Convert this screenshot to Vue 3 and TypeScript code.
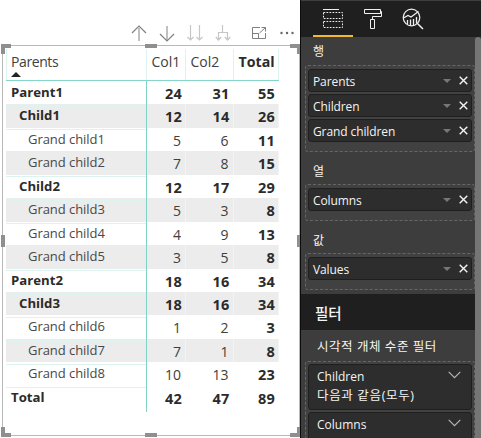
<script setup lang="ts">
interface Row {
  label: string
  level: number
  values: number[]
}

interface Well {
  title: string
  kind: string
  fields: string[]
}

const rows: Row[] = [
  { label: 'Parent1', level: 0, values: [24, 31, 55] },
  { label: 'Child1', level: 1, values: [12, 14, 26] },
  { label: 'Grand child1', level: 2, values: [5, 6, 11] },
  { label: 'Grand child2', level: 2, values: [7, 8, 15] },
  { label: 'Child2', level: 1, values: [12, 17, 29] },
  { label: 'Grand child3', level: 2, values: [5, 3, 8] },
  { label: 'Grand child4', level: 2, values: [4, 9, 13] },
  { label: 'Grand child5', level: 2, values: [3, 5, 8] },
  { label: 'Parent2', level: 0, values: [18, 16, 34] },
  { label: 'Child3', level: 1, values: [18, 16, 34] },
  { label: 'Grand child6', level: 2, values: [1, 2, 3] },
  { label: 'Grand child7', level: 2, values: [7, 1, 8] },
  { label: 'Grand child8', level: 2, values: [10, 13, 23] },
  { label: 'Total', level: 0, values: [42, 47, 89] },
]

const wells: Well[] = [
  { title: '행', kind: 'rows', fields: ['Parents', 'Children', 'Grand children'] },
  { title: '열', kind: 'cols', fields: ['Columns'] },
  { title: '값', kind: 'vals', fields: ['Values'] },
]

const handles = ['tl', 'tc', 'tr', 'ml', 'mr', 'bl', 'bc', 'br']

const isShaded = (i: number): boolean => i % 2 === 1 && i < rows.length - 1
</script>

<template>
  <div class="app">
    <section class="canvas">
      <div class="toolbar">
        <svg width="170" height="18" viewBox="0 0 170 18" fill="none">
          <g stroke="#c0c0c0" stroke-width="2">
            <path d="M9 3V16M37 1V15" />
          </g>
          <g stroke="#808080" stroke-width="1.2">
            <path d="M2 8L9 1L16 8M30 9L37 16L44 9" />
          </g>
          <g stroke="#c6c6c6" stroke-width="1.2">
            <path d="M60.5 0V15M69.5 0V15M57.5 12L60.5 15L63.5 12M66.5 12L69.5 15L72.5 12" />
            <path d="M92.500 0V7M88.500 15V7.500H97.500V15M85.800 12L88.500 15L91.200 12M94.800 12L97.500 15L100.200 12" />
          </g>
          <g stroke="#808080" stroke-width="1">
            <path d="M130 2.500H122.500V13.500H135.500V8M122.500 8.500H128.500V13.500M129.500 8L135.500 2.500M131.500 2.500H135.500V6.500" />
          </g>
          <g fill="#666">
            <circle cx="151.500" cy="8" r="1.200" />
            <circle cx="157" cy="8" r="1.200" />
            <circle cx="162.500" cy="8" r="1.200" />
          </g>
        </svg>
      </div>
      <div class="visual">
        <i v-for="h in handles" :key="h" class="handle" :class="h"></i>
        <div class="matrix">
          <div class="row head">
            <div class="label"><span>Parents</span><i class="sort"></i></div>
            <div class="c">Col1</div>
            <div class="c">Col2</div>
            <div class="c total">Total</div>
          </div>
          <div v-for="(r, i) in rows" :key="r.label" class="row" :class="['l' + r.level, { alt: isShaded(i), last: i === rows.length - 1 }]">
            <div class="label"><span>{{ r.label }}</span></div>
            <div v-for="(v, k) in r.values" :key="k" class="c" :class="{ total: k === 2 }">{{ v }}</div>
          </div>
        </div>
      </div>
    </section>

    <aside class="panel">
      <div class="tabs">
        <svg width="110" height="24" viewBox="0 0 110 24" fill="none" stroke="#f0f0f0">
          <path d="M1 1.500H17" />
          <path d="M1.500 4.500H20.500V10.500H1.500ZM1.500 13.500H20.500V19.500H1.500Z" stroke-dasharray="1.700 1.300" />
          <path d="M42.500 1.500H58.500V5.500H42.500ZM58.500 3.500H59.500V8.500H50.500V11.500M48.500 11.500H52.500V20.500H48.500Z" />
          <circle cx="89.500" cy="9.500" r="8.300" stroke-width="1.200" />
          <path d="M95.500 15.500L101 21" stroke-width="1.500" />
          <path d="M81.500 10L86 7.500L89 9L96.500 3.500" stroke-width="1.200" />
          <path d="M85.500 12V16M88.500 11.500V17.500M91.500 11V17.500M94.500 9V15.500" stroke-width="1.300" />
        </svg>
      </div>
      <div class="body">
        <div class="content">
          <div v-for="w in wells" :key="w.title" class="group" :class="w.kind">
            <div class="title">{{ w.title }}</div>
            <div class="well">
              <div v-for="f in w.fields" :key="f" class="chip">
                <span>{{ f }}</span>
                <i class="caret"></i>
                <svg width="9" height="9" viewBox="0 0 9 9"><path d="M.7 .7L8.300 8.300M8.300 .7L.7 8.300" stroke="#f4f4f4" stroke-width="1.400" /></svg>
              </div>
            </div>
          </div>
          <div class="filter-head">필터</div>
          <div class="filter-sub">시각적 개체 수준 필터</div>
          <div class="well filters">
            <div class="card">
              <div class="card-top">
                <span>Children</span>
                <svg width="13" height="8" viewBox="0 0 13 8"><path d="M.7 .8L6.500 6.600L12.300 .8" fill="none" stroke="#b5b5b5" stroke-width="1.200" /></svg>
              </div>
              <div class="cond">다음과 같음(모두)</div>
            </div>
            <div class="card">
              <div class="card-top">
                <span>Columns</span>
                <svg width="13" height="8" viewBox="0 0 13 8"><path d="M.7 .8L6.500 6.600L12.300 .8" fill="none" stroke="#b5b5b5" stroke-width="1.200" /></svg>
              </div>
            </div>
          </div>
        </div>
        <div class="scroll"></div>
      </div>
    </aside>
  </div>
</template>

<style>
body { margin: 0; overflow: hidden; }
</style>

<style scoped>
* { box-sizing: border-box; }
.app {
  display: flex;
  width: 481px;
  height: 438px;
  overflow: hidden;
  background: #fff;
  font-family: "Open Sans", "Noto Sans CJK KR", sans-serif;
  color: #2b2b2b;
}
.canvas { width: 300px; padding: 25px 0 0 2px; flex: none; }
.toolbar { height: 20px; padding-left: 128px; }
.toolbar svg { display: block; }
.visual {
  position: relative;
  width: 298px;
  height: 391px;
  border: 1px solid #b8b8b8;
  padding: 3px 0 0 3px;
}
.handle { position: absolute; width: 12px; height: 4px; background: #8f8f8f; }
.tl, .tr, .bl, .br { width: 10px; height: 10px; background: none; border: 0 solid #8f8f8f; }
.tl { left: -2px; top: -2px; border-width: 4px 0 0 4px; }
.tr { right: -1px; top: -2px; border-width: 4px 3px 0 0; }
.bl { left: -2px; bottom: -2px; border-width: 0 0 4px 4px; }
.br { right: -1px; bottom: -2px; border-width: 0 3px 4px 0; }
.tc { left: 142px; top: -2px; }
.bc { left: 142px; bottom: -2px; }
.ml { left: -2px; top: 189px; width: 4px; height: 12px; }
.mr { right: -1px; top: 189px; width: 3px; height: 12px; }

.matrix { width: 273px; }
.row {
  display: grid;
  grid-template-columns: 141px 39px 47.5px 45.5px;
  height: 23.45px;
  font-size: 14px;
}
.label {
  padding-left: 5px;
  border-right: 1px solid #7fd3c6;
  border-bottom: 1px solid #dcf3ef;
  white-space: nowrap;
}
.c { text-align: right; padding-right: 4px; border-right: 1px solid #f4f4f4; line-height: 26px; color: #404040; }
.row:not(.alt):not(.head) .c { border-right-color: #fff; }
.c.total, .l0 .c, .l1 .c { font-weight: 700; font-size: 14.500px; letter-spacing: .2px; color: #2b2b2b; padding-right: 3px; }
.alt { background: #ececec; }
.l0, .l1 { font-weight: 700; }
.l0 .label, .l1 .label { font-size: 13.200px; line-height: 22px; }
.l1 .label { padding-left: 13px; }
.l2 .label { padding-left: 22px; font-size: 13px; line-height: 22.500px; color: #484848; letter-spacing: -.05px; }
.last .label { border-bottom: 0; }
.row.head { height: 32px; border-bottom: 1px solid #86d5ca; font-size: 14px; }
.head .label { border-right-color: #dcf3ef; border-left: 1px solid #dcf3ef; border-bottom: 0; padding-left: 4px; line-height: 25px; font-size: 14px; letter-spacing: -.4px; color: #404040; }
.head .c { border-right: 1px solid #dcf3ef; line-height: 25px; text-align: left; padding: 0 0 0 4.500px; }
.head .c.total { letter-spacing: 0; font-size: 14.200px; padding: 0 0 0 5px; }
.sort { display: block; width: 0; margin: -2px 0 0 0; border: 5px solid transparent; border-top: 0; border-bottom: 5px solid #222; }

.panel { width: 181px; border-left: 1px solid #0c0c0c; background: #3d3d3d; color: #f4f4f4; flex: none; }
.tabs { height: 37px; background: linear-gradient(#f2b92e, #f2b92e) 12px 34px / 40px 2px no-repeat #1f1f1f; border-top: 1px solid #3f3f3f; padding: 7px 0 0 21px; }
.tabs svg { display: block; }
.body { display: flex; height: 401px; }
.content { width: 174px; }
.scroll { width: 6px; background: #757575; border-radius: 3px 3px 0 0; }
.title { padding-left: 12px; font-size: 12px; line-height: 30px; height: 28px; }
.group.cols .title, .group.vals .title { height: 32px; line-height: 39px; }
.well { margin-left: 4px; width: 170px; border: 1px dashed #666; border-radius: 3px; background: #414141; padding: 3px 2px 0; }
.rows .well { height: 87px; }
.cols .well { height: 37px; }
.vals .well { height: 37px; }
.chip {
  display: flex;
  align-items: center;
  height: 23px;
  margin-bottom: 2px;
  padding: 0 3px 0 4px;
  border: 1px solid #1f1f1f;
  border-radius: 3px;
  background: #2d2d2d;
  font-size: 12px;
  letter-spacing: -.1px;
}
.chip span { flex: 1; white-space: nowrap; padding-top: 1px; }
.caret { border: 4px solid transparent; border-bottom: 0; border-top-color: #777; margin-right: 8px; }
.filter-head { margin-top: 4px; height: 36px; line-height: 40px; padding-left: 14px; background: #1f1f1f; font-size: 14.500px; font-weight: 500; }
.filter-sub { height: 31px; line-height: 34px; padding-left: 16px; font-size: 12.500px; letter-spacing: .55px; white-space: nowrap; }
.filters { height: 90px; padding-top: 2px; }
.card { height: 46px; margin-bottom: 2px; border: 1px solid #1f1f1f; border-radius: 3px; background: #2d2d2d; padding: 2px 10px 0 8px; font-size: 12px; }
.card-top { display: flex; justify-content: space-between; line-height: 19px; }
.card-top svg { margin-top: 4px; }
.cond { line-height: 19px; white-space: nowrap; font-size: 12.500px; letter-spacing: .65px; }
</style>
